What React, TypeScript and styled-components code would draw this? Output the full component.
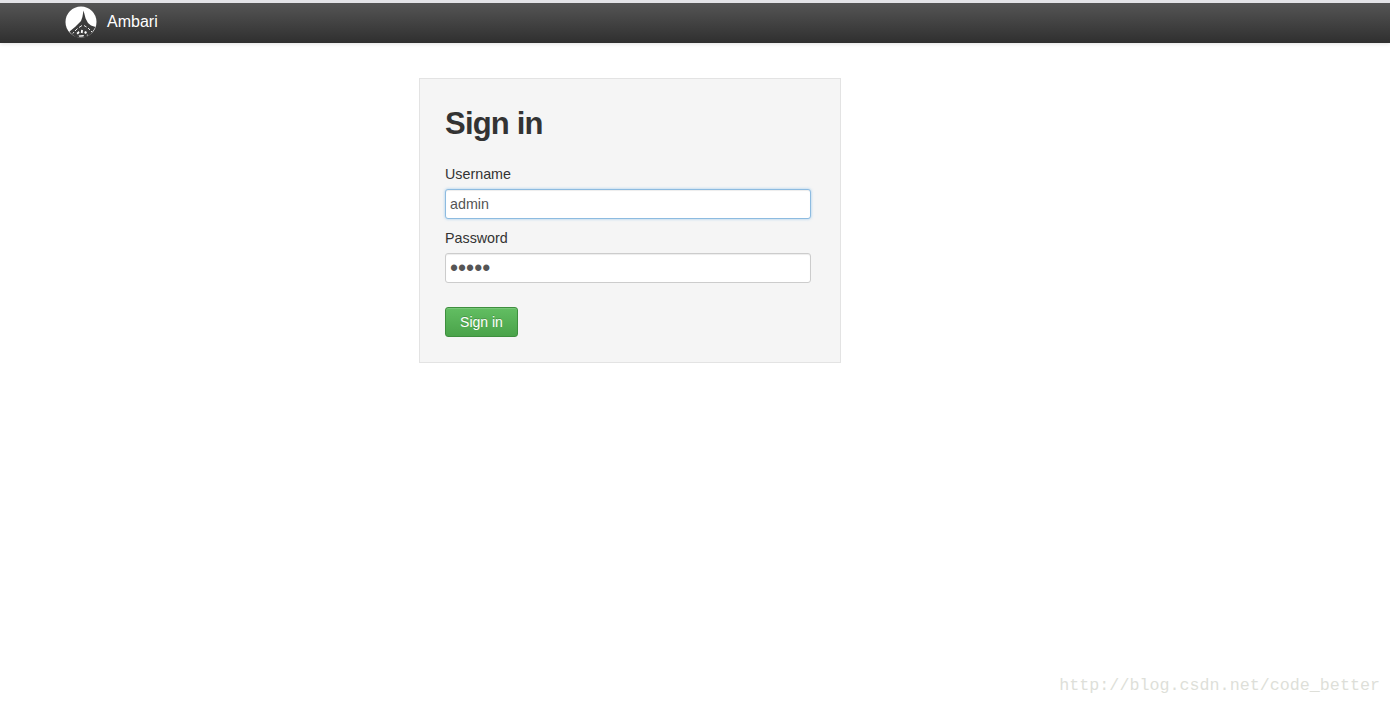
import React from "react";
import styled, { createGlobalStyle } from "styled-components";

const Global = createGlobalStyle`
  html, body { margin: 0; padding: 0; height: 100%; background: #fff; }
  body { font-family: "Liberation Sans", Arial, sans-serif; font-size: 14px; color: #333; overflow: hidden; }
  * { box-sizing: border-box; }
`;

const Page = styled.div`
  position: relative;
  width: 1390px;
  height: 705px;
  padding-top: 3px;
  background: #fff;
  &::before {
    content: "";
    position: absolute;
    top: 0; left: 0; right: 0;
    height: 3px;
    background: #e4e4e8;
  }
`;

const Navbar = styled.header`
  height: 40px;
  display: flex;
  align-items: center;
  gap: 10px;
  padding: 0 0 3px 65px;
  background: linear-gradient(to bottom, #555 0%, #2f2f2f 100%);
  box-shadow: 0 1px 4px rgba(0, 0, 0, 0.12);
`;

const Brand = styled.span`
  color: #fff;
  font-size: 16px;
  line-height: 20px;
`;

const Main = styled.main`
  padding: 35px 0 0 419px;
`;

const Card = styled.section`
  width: 422px;
  height: 285px;
  padding: 20px 29px 0 25px;
  background: #f5f5f5;
  border: 1px solid #e3e3e3;
`;

const Title = styled.h1`
  margin: 0 0 15px;
  font-size: 31px;
  font-weight: 700;
  line-height: 50px;
  letter-spacing: -0.8px;
  color: #333;
`;

const Field = styled.div`
  margin-bottom: 9px;
  &:last-of-type { margin-bottom: 0; }
`;

const Label = styled.label`
  display: block;
  height: 20px;
  margin-bottom: 5px;
  font-size: 14.3px;
  line-height: 20px;
  color: #333;
`;

const Input = styled.input<{ $focused?: boolean; $secret?: boolean }>`
  display: block;
  width: 366px;
  height: 30px;
  padding: 0 4px;
  font-family: "Liberation Sans", Arial, sans-serif;
  font-size: ${(p) => (p.$secret ? "23px" : "14.3px")};
  color: #555;
  background: #fff;
  border-radius: 3px;
  outline: none;
  border: 1px solid ${(p) => (p.$focused ? "#8dbbe0" : "#ccc")};
  box-shadow: ${(p) =>
    p.$focused
      ? "inset 0 1px 1px rgba(0,0,0,.075), 0 0 3px rgba(102,175,233,.6)"
      : "inset 0 1px 1px rgba(0,0,0,.075)"};
`;

const SubmitButton = styled.button`
  display: block;
  width: 73px;
  height: 30px;
  margin-top: 24px;
  padding: 0;
  font-family: "Liberation Sans", Arial, sans-serif;
  font-size: 14px;
  color: #fff;
  background: linear-gradient(to bottom, #62be62 0%, #4aa34a 100%);
  border: 1px solid #3e8f3e;
  border-radius: 3px;
  box-shadow: inset 0 1px 0 rgba(255,255,255,.15);
  text-shadow: 0 -1px 0 rgba(0,0,0,.2);
`;

const Watermark = styled.span`
  position: absolute;
  right: 10px;
  top: 676px;
  font-family: "Liberation Mono", monospace;
  font-size: 16.72px;
  line-height: 20px;
  color: #dedfd9;
`;

const Logo = () => (
  <svg width="32" height="32" viewBox="0 0 32 32" aria-hidden="true">
    <circle cx="16" cy="16" r="15.5" fill="#fff" />
    {/* spire and roof */}
    <path d="M18.5 4.5 L17.4 11 L16 15 L10 21 L4.5 25.5 L7 28.5 L11 31.5 L21 31.5 L26 28 L30.5 21 L26 19.5 L23 17 L20.6 12.5 Z" fill="#3c3c3c" />
    {/* broken white eaves */}
    <path d="M17 19.5 L14 21.5 M12.5 22.5 L10 25 M9 26 L7.8 27.5" stroke="#fff" strokeWidth="0.9" fill="none" />
    <path d="M19 19.5 L21.5 21 M23 22 L25 24 M26 25 L27 26" stroke="#fff" strokeWidth="0.9" fill="none" />
    {/* speckled hull */}
    <path d="M11.5 27 l2.2 -2 l0.9 1.8 l-1.8 1.6 Z M16.2 23.8 l1.8 0.4 l-0.4 3 l-1.8 -0.5 Z M20 25 l2 1 l-1 2 l-1.8 -1 Z M13.5 29.5 l5.5 -0.4 l-0.6 1.5 l-4 0.2 Z M21.5 29 l1.6 -0.6 l-0.6 1.4 Z" fill="#fff" />
  </svg>
);

export default function App() {
  return (
    <Page>
      <Global />
      <Navbar>
        <Logo />
        <Brand>Ambari</Brand>
      </Navbar>
      <Main>
        <Card>
          <Title>Sign in</Title>
          <Field>
            <Label>Username</Label>
            <Input $focused type="text" defaultValue="admin" />
          </Field>
          <Field>
            <Label>Password</Label>
            <Input $secret type="password" defaultValue="admin" />
          </Field>
          <SubmitButton type="button">Sign in</SubmitButton>
        </Card>
      </Main>
      <Watermark>http://blog.csdn.net/code_better</Watermark>
    </Page>
  );
}
